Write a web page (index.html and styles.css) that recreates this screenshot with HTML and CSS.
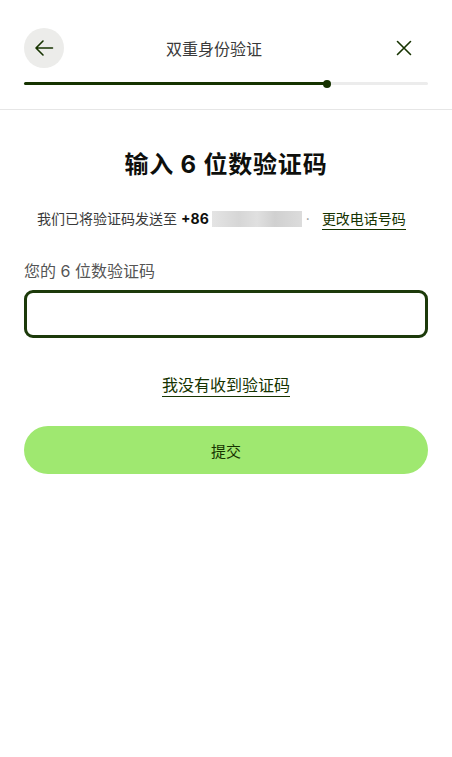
FILE: index.html
```html
<!DOCTYPE html>
<html lang="zh">
<head>
<meta charset="utf-8">
<link rel="stylesheet" href="styles.css">
</head>
<body>
<div class="page">
  <header class="top">
    <div class="toprow">
      <button class="back" aria-label="返回">
        <svg width="24" height="24" viewBox="0 0 24 24" fill="none" stroke="#163300" stroke-width="1.6" stroke-linecap="round" stroke-linejoin="round"><path d="M20.5 12H4.5M11 5l-7 7 7 7"/></svg>
      </button>
      <div class="title">双重身份验证</div>
      <button class="close" aria-label="关闭">
        <svg width="16" height="16" viewBox="0 0 16 16" fill="none" stroke="#163300" stroke-width="1.6" stroke-linecap="round"><path d="M1.5 1.5l13 13M14.5 1.5l-13 13"/></svg>
      </button>
    </div>
    <div class="progress">
      <div class="fill"></div>
      <div class="dot"></div>
    </div>
  </header>
  <main class="content">
    <h1 class="heading">输入 6 位数验证码</h1>
    <p class="sent">我们已将验证码发送至 <b>+86</b><span class="blur"></span><span class="sep">·</span><a class="link" href="#">更改电话号码</a></p>
    <label class="label">您的 6 位数验证码</label>
    <div class="input"></div>
    <div class="resend"><a class="link big" href="#">我没有收到验证码</a></div>
    <button class="submit">提交</button>
  </main>
</div>
</body>
</html>
```
FILE: styles.css
```css
* { box-sizing: border-box; }
html, body { margin: 0; padding: 0; background: #fff; }
body {
  font-family: "Inter", "Noto Sans CJK SC", sans-serif;
  color: #0e0f0c;
}
.page { width: 452px; min-height: 757px; background: #fff; }
.top {
  padding: 28px 24px 0;
  border-bottom: 1px solid #e6e6e6;
  height: 110px;
}
.toprow {
  display: flex;
  align-items: center;
  justify-content: space-between;
  height: 40px;
}
.back {
  width: 40px; height: 40px;
  border-radius: 50%;
  border: 0;
  background: #ececea;
  display: flex; align-items: center; justify-content: center;
  padding: 0;
}
.close {
  width: 40px; height: 40px;
  border: 0; background: transparent;
  display: flex; align-items: center; justify-content: flex-end;
  padding: 0 16px 0 0;
}
.title {
  font-size: 16px;
  color: #3a3a3a;
  margin-right: 24px;
}
.progress {
  margin-top: 14px;
  position: relative;
  height: 3px;
  background: #ececec;
  border-radius: 2px;
}
.fill {
  width: 303px;
  height: 3px;
  background: #163300;
  border-radius: 2px;
}
.dot {
  position: absolute;
  left: 299px;
  top: -2.5px;
  width: 8px; height: 8px;
  border-radius: 50%;
  background: #163300;
}
.content {
  padding: 0 24px;
  display: flex;
  flex-direction: column;
}
.heading {
  margin: 38px 0 0;
  text-align: center;
  font-size: 24px;
  font-weight: 700;
  line-height: 34px;
  letter-spacing: 0.8px;
}
.sent {
  margin: 26px 0 0;
  padding-right: 9px;
  text-align: center;
  font-size: 14px;
  line-height: 22px;
  color: #3a3a3a;
  display: flex;
  align-items: center;
  justify-content: center;
}
.sent b { color: #0e0f0c; margin-left: 4px; font-weight: 700; }
.blur {
  display: inline-block;
  width: 90px; height: 16px;
  margin-left: 3px;
  background: linear-gradient(90deg, #e4e4e4, #d6d6d6 30%, #e0e0e0 50%, #d0d0d0 70%, #dcdcdc);
}
.sep { margin: 0 12px 0 4px; color: #999; }
.link {
  color: #163300;
  text-decoration: none;
  border-bottom: 1.5px solid #163300;
  line-height: 20px;
}
.label {
  margin-top: 30px;
  font-size: 16px;
  color: #555;
  line-height: 22px;
}
.input {
  margin-top: 8px;
  height: 48px;
  border: 3px solid #1c3a0a;
  border-radius: 9px;
}
.resend {
  margin-top: 36px;
  text-align: center;
}
.link.big { font-size: 16px; line-height: 22px; padding-bottom: 1px; }
.submit {
  margin-top: 30px;
  height: 48px;
  border: 0;
  border-radius: 24px;
  background: #9fe870;
  color: #163300;
  font-family: inherit;
  font-size: 15px;
}
```
